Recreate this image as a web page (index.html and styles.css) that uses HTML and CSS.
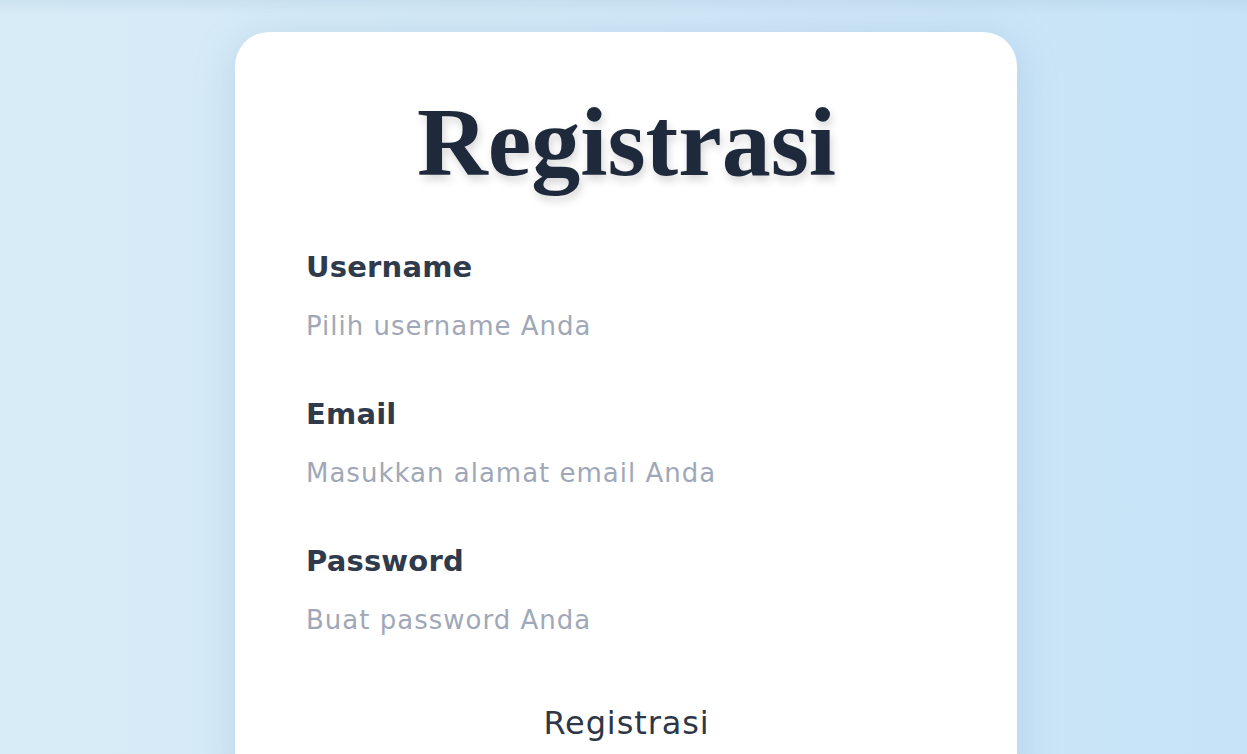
FILE: index.html
```html
<!DOCTYPE html>
<html lang="id">
<head>
<meta charset="utf-8">
<title>Registrasi</title>
<link rel="stylesheet" href="styles.css">
</head>
<body>
<main class="page">
  <form class="card">
    <h1 class="title">Registrasi</h1>
    <div class="fields">
      <div class="field">
        <label class="label" for="username">Username</label>
        <input class="input" id="username" type="text" placeholder="Pilih username Anda">
      </div>
      <div class="field">
        <label class="label" for="email">Email</label>
        <input class="input" id="email" type="email" placeholder="Masukkan alamat email Anda">
      </div>
      <div class="field">
        <label class="label" for="password">Password</label>
        <input class="input" id="password" type="password" placeholder="Buat password Anda">
      </div>
    </div>
    <button class="submit" type="button">Registrasi</button>
  </form>
</main>
</body>
</html>
```
FILE: styles.css
```css
* { box-sizing: border-box; }
html, body { margin: 0; height: 100%; }
body {
  background: linear-gradient(to right, #d8ecf7 0%, #d2e8f7 50%, #c6e3f8 100%);
  font-family: "DejaVu Sans", "Open Sans", sans-serif;
  overflow: hidden;
}
.page {
  position: relative;
  min-height: 100%;
  display: flex;
  justify-content: center;
  padding: 32px 0 0 5px;
  background: linear-gradient(to bottom, rgba(150,180,200,0.18) 0px, rgba(150,180,200,0) 14px);
}
.card {
  width: 782px;
  background: #ffffff;
  border-radius: 34px;
  padding: 62px 70px 60px 71px;
  box-shadow: 0 8px 40px rgba(110, 150, 190, 0.28);
  display: flex;
  flex-direction: column;
}
.title {
  margin: 0;
  text-align: center;
  font-family: "Liberation Serif", "Times New Roman", serif;
  font-weight: 700;
  font-size: 98px;
  line-height: 96px;
  color: #1e293b;
  text-shadow: 2px 5px 8px rgba(0, 0, 0, 0.16);
}
.fields {
  margin-top: 59px;
  display: flex;
  flex-direction: column;
  gap: 53px;
}
.field {
  display: flex;
  flex-direction: column;
  gap: 24px;
}
.label {
  font-size: 29px;
  line-height: 36px;
  font-weight: 700;
  letter-spacing: 0.2px;
  color: #2f3a4c;
}
.input {
  border: none;
  outline: none;
  padding: 0;
  margin: 0;
  font-family: inherit;
  font-size: 26px;
  line-height: 34px;
  height: 34px;
  letter-spacing: 1px;
  color: #2d3748;
  background: transparent;
}
.input::placeholder { color: #a0a8b8; }
.submit {
  margin-top: 66px;
  align-self: center;
  border: none;
  background: transparent;
  padding: 0;
  font-family: inherit;
  font-size: 32px;
  line-height: 40px;
  font-weight: 400;
  letter-spacing: 0.9px;
  color: #2d3748;
}
```
